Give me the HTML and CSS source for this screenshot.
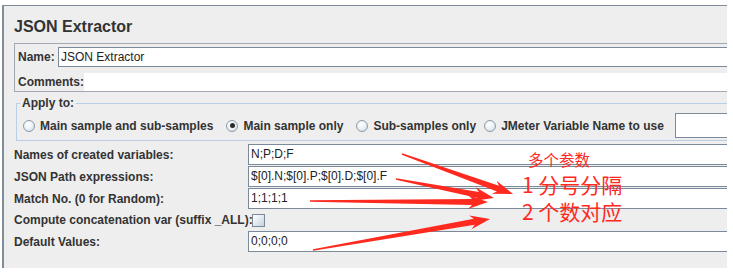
FILE: index.html
```html
<!DOCTYPE html>
<html>
<head>
<meta charset="utf-8">
<link rel="stylesheet" href="styles.css">
</head>
<body>
<div class="panel">
  <div class="title">JSON Extractor</div>
  <div class="namebox">
    <div class="row-name"><span class="lbl name-lbl">Name:</span><div class="field name-field">JSON Extractor</div></div>
    <div class="row-comments"><span class="lbl">Comments:</span><div class="area"></div></div>
  </div>
  <fieldset class="apply">
    <legend>Apply to:</legend>
    <div class="radios">
      <span class="radio"><span class="circle"></span>Main sample and sub-samples</span>
      <span class="radio"><span class="circle on"></span>Main sample only</span>
      <span class="radio"><span class="circle"></span>Sub-samples only</span>
      <span class="radio radio-last"><span class="circle"></span>JMeter Variable Name to use</span>
      <div class="field varname"></div>
    </div>
  </fieldset>
  <div class="form">
    <span class="lbl">Names of created variables:</span><div class="field">N;P;D;F</div>
    <span class="lbl">JSON Path expressions:</span><div class="field">$[0].N;$[0].P;$[0].D;$[0].F</div>
    <span class="lbl">Match No. (0 for Random):</span><div class="field">1;1;1;1</div>
    <span class="lbl">Compute concatenation var (suffix _ALL):</span><div class="checkcell"><span class="checkbox"></span></div>
    <span class="lbl">Default Values:</span><div class="field">0;0;0;0</div>
  </div>
</div>
<div class="note note-small">多个参数</div>
<div class="note note-big note-1">1 分号分隔</div>
<div class="note note-big note-2">2 个数对应</div>
<svg class="arrows" width="733" height="277" viewBox="0 0 733 277">
  <polygon points="401.75,154.71 496.93,191.40 491.82,193.81 513,194 496.56,180.64 498.97,185.76 402.25,153.29"/>
  <polygon points="395.86,179.74 477.72,197.91 473.04,201.06 494,198 475.70,187.32 478.86,192.02 396.14,178.26"/>
  <polygon points="310,201.75 471.98,204.91 467.96,208.89 488,202 468.04,194.89 472.02,198.91 310,200.25"/>
  <polygon points="313.13,250.74 474.76,224.72 471.51,229.35 490,219 469.09,215.56 473.72,218.81 312.87,249.26"/>
</svg>
</body>
</html>
```

FILE: styles.css
```css
html, body {
  margin: 0;
  padding: 0;
  background: #ffffff;
}
body {
  width: 733px;
  height: 277px;
  position: relative;
  overflow: hidden;
  font-family: "Liberation Sans", Arial, sans-serif;
  font-size: 12px;
  color: #333333;
}
.panel {
  margin: 5px 0 0 2px;
  width: 723px;
  height: 262px;
  border-top: 1px solid #7f8c99;
  border-left: 2px solid #7f8c99;
  background: #eeeeee;
  overflow: hidden;
}
.title {
  margin: 0 0 7px 10px;
  padding-top: 12px;
  height: 18px;
  line-height: 18px;
  font-size: 16px;
  font-weight: bold;
  color: #333333;
  white-space: nowrap;
}
.lbl {
  font-weight: bold;
  white-space: nowrap;
  color: #333333;
}
.field {
  box-sizing: border-box;
  background: #ffffff;
  border: 1px solid #7a8a99;
  padding-left: 2px;
  white-space: nowrap;
  color: #222222;
}
.namebox {
  margin-left: 10px;
  width: 760px;
  box-sizing: border-box;
  border: 1px solid #a2a9b0;
  padding: 3px 0 0 2px;
}
.row-name {
  display: flex;
  align-items: center;
  height: 20px;
}
.name-lbl {
  width: 41px;
  padding-left: 1px;
  box-sizing: border-box;
}
.name-field {
  flex: 1;
  height: 20px;
  line-height: 18px;
}
.row-comments {
  display: flex;
  align-items: center;
  height: 18px;
  margin-top: 6px;
}
.row-comments .lbl {
  padding-left: 1px;
}
.area {
  flex: 1;
  height: 18px;
  background: #ffffff;
}
.apply {
  margin: 4px 0 0 12px;
  width: 760px;
  box-sizing: border-box;
  border: 1px solid #b8cfe5;
  padding: 3px 0 2px 6px;
  min-width: 0;
}
.apply legend {
  font-weight: bold;
  line-height: 14px;
  padding: 0 2px;
  margin-left: -3px;
  color: #333333;
}
.radios {
  display: flex;
  align-items: center;
  height: 25px;
  gap: 13px;
}
.radio {
  display: flex;
  align-items: center;
  font-weight: bold;
  white-space: nowrap;
  color: #333333;
}
.radio-last {
  margin-left: -5px;
}
.circle {
  box-sizing: border-box;
  width: 12px;
  height: 12px;
  margin-right: 5px;
  border-radius: 50%;
  border: 1px solid #8d9aa7;
  background: radial-gradient(circle at 40% 35%, #ffffff 0%, #eef2f6 45%, #cdd8e3 100%);
  display: flex;
  align-items: center;
  justify-content: center;
}
.circle.on::after {
  content: "";
  width: 5px;
  height: 5px;
  border-radius: 50%;
  background: #2a2a2a;
}
.varname {
  margin-left: -2px;
  width: 80px;
  height: 25px;
  flex: none;
}
.form {
  margin: 3px 0 0 10px;
  display: grid;
  grid-template-columns: 234px 500px;
  grid-template-rows: 21px 21px 21px 20px 21px;
  row-gap: 1px;
  align-items: center;
}
.form .field {
  height: 21px;
  line-height: 19px;
}
.checkcell {
  display: flex;
  align-items: center;
  height: 20px;
}
.checkbox {
  box-sizing: border-box;
  width: 13px;
  height: 13px;
  margin-left: 4px;
  border: 1px solid #7a8a99;
  background: linear-gradient(135deg, #ffffff 0%, #e3eaf1 50%, #c5d2df 100%);
}
.note {
  position: absolute;
  color: #ff2a1f;
  font-family: "Noto Sans CJK SC", "Noto Sans", sans-serif;
  white-space: nowrap;
}
.note-small {
  left: 528px;
  top: 152px;
  font-size: 15.5px;
  line-height: 15px;
}
.note-big {
  left: 522px;
  font-size: 21px;
  line-height: 20px;
}
.note-1 { top: 174px; }
.note-2 { top: 201px; }
.arrows {
  position: absolute;
  left: 0;
  top: 0;
  pointer-events: none;
}
.arrows polygon {
  fill: #ff2a1f;
}
```
